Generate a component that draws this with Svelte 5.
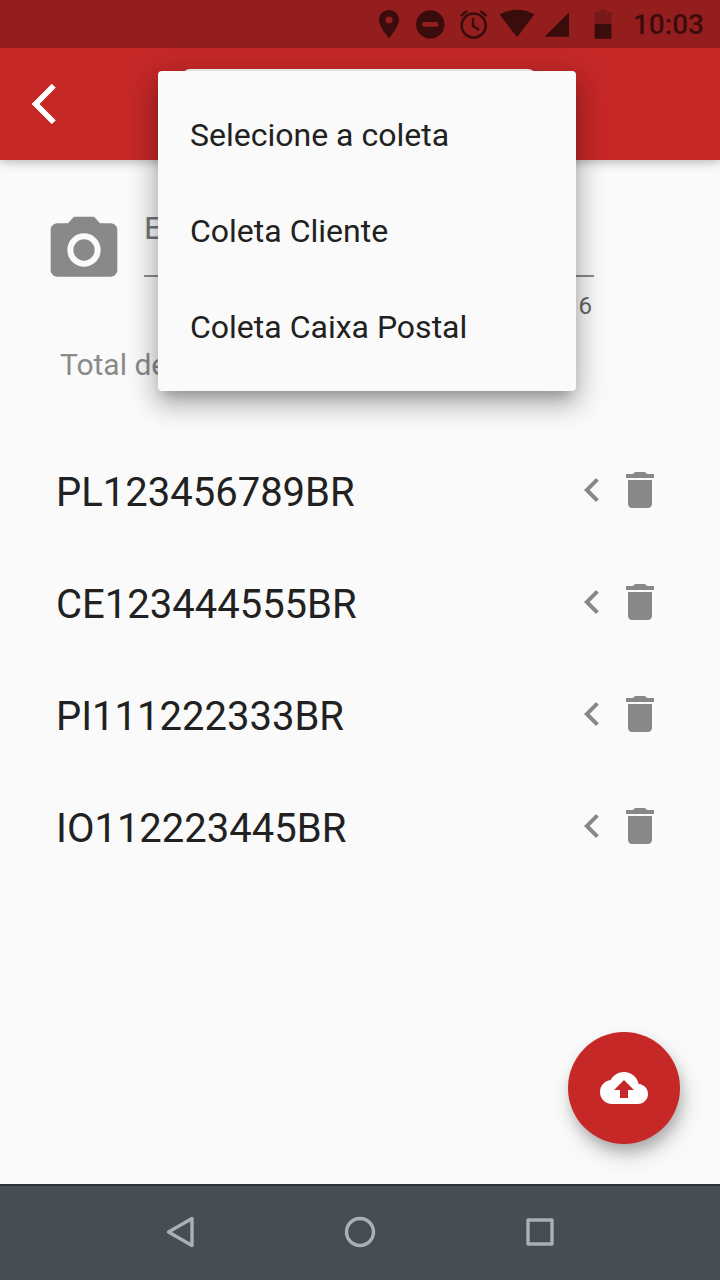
<script lang="ts">
  let codes: string[] = $state(['PL123456789BR', 'CE123444555BR', 'PI111222333BR', 'IO112223445BR']);

  const options = ['Selecione a coleta', 'Coleta Cliente', 'Coleta Caixa Postal'];

  function remove(code: string) {
    codes = codes.filter(c => c !== code);
  }
</script>

<div class="screen">
  <div class="status-bar">
    <svg width="250" height="48" viewBox="0 0 250 48" fill="currentColor">
      <path fill-rule="evenodd" d="M19 10c-5.600 0-10 4.300-10 9.800C9 27.300 19 38 19 38s10-10.700 10-18.200C29 14.300 24.600 10 19 10zm0 6.400a3.500 3.500 0 1 1 0 7 3.500 3.500 0 0 1 0-7z" />
      <path fill-rule="evenodd" d="M60.300 10.200a14.200 14.200 0 1 0 0 28.400 14.200 14.200 0 0 0 0-28.400zM54.500 22h11.600a2.400 2.400 0 0 1 0 4.800H54.500a2.400 2.400 0 0 1 0-4.800z" />
      <g fill="none" stroke="currentColor" stroke-width="2.600">
        <circle cx="103.700" cy="25.500" r="12" />
        <path d="M90.800 16l6.200-5M116.600 16l-6.200-5M103 18v8l6 3.800" stroke-width="2.300" />
      </g>
      <path d="M129.700 14.500C139 8.200 155 8.200 164.300 14.500L147 37.300z" />
      <path d="M174.500 36.700L199 12.500v24.200z" />
      <path d="M224.500 24V12h5V9.500h7V12h5v12z" opacity="0.3" />
      <path d="M224.500 24h17v14.800h-17z" />
    </svg>
    <span class="clock">10:03</span>
  </div>

  <header class="app-bar">
    <button class="icon-button" aria-label="Voltar">
      <svg class="back" width="48" height="48" viewBox="0 0 24 24">
        <path d="M11.670 3.870L9.900 2.100 0 12l9.900 9.900 1.770-1.770L3.540 12z" />
      </svg>
    </button>
    <div class="dropdown"></div>
  </header>

  <main>
    <div class="entry">
      <svg width="80" height="80" viewBox="0 0 24 24" fill="currentColor">
        <circle cx="12" cy="12" r="3.200" />
        <path d="M9 2L7.170 4H4c-1.100 0-2 .9-2 2v12c0 1.100.9 2 2 2h16c1.100 0 2-.9 2-2V6c0-1.100-.9-2-2-2h-3.170L15 2H9zm3 15c-2.760 0-5-2.240-5-5s2.240-5 5-5 5 2.240 5 5-2.240 5-5 5z" />
      </svg>
      <div class="field">
        <div class="input">E</div>
        <div class="counter">6</div>
      </div>
    </div>

    <div class="total">Total de</div>

    <ul class="codes">
      {#each codes as code (code)}
        <li>
          <span class="code">{code}</span>
          <svg width="48" height="48" viewBox="0 0 24 24" fill="currentColor">
            <path d="M15.410 7.410L14 6l-6 6 6 6 1.410-1.410L10.830 12z" />
          </svg>
          <button class="icon-button" aria-label="Excluir" onclick={() => remove(code)}>
            <svg width="48" height="48" viewBox="0 0 24 24" fill="currentColor">
              <path d="M6 19c0 1.100.9 2 2 2h8c1.100 0 2-.9 2-2V7H6v12zM19 4h-3.500l-1-1h-5l-1 1H5v2h14V4z" />
            </svg>
          </button>
        </li>
      {/each}
    </ul>
  </main>

  <nav class="nav-bar">
    <svg width="48" height="48" viewBox="0 0 48 48">
      <path d="M12.500 24L36 10.500v27z" />
    </svg>
    <svg width="48" height="48" viewBox="0 0 48 48">
      <circle cx="24" cy="24" r="13.500" />
    </svg>
    <svg width="48" height="48" viewBox="0 0 48 48">
      <rect x="12" y="12" width="24" height="24" />
    </svg>
  </nav>

  <div class="menu">
    {#each options as option}
      <div class="menu-item">{option}</div>
    {/each}
  </div>

  <button class="fab" aria-label="Enviar">
    <svg width="48" height="48" viewBox="0 0 24 24" fill="#fff">
      <path d="M19.350 10.040C18.670 6.590 15.640 4 12 4 9.110 4 6.600 5.640 5.350 8.040 2.340 8.360 0 10.910 0 14c0 3.310 2.690 6 6 6h13c2.760 0 5-2.240 5-5 0-2.640-2.050-4.780-4.650-4.960zM14 13v4h-4v-4H7l5-5 5 5h-3z" />
    </svg>
  </button>
</div>

<style>
  :global(body) {
    margin: 0;
  }

  .screen {
    position: relative;
    display: flex;
    flex-direction: column;
    width: 720px;
    height: 1280px;
    overflow: hidden;
    background: #fafafa;
    color: #212121;
    font-family: Roboto, sans-serif;
  }

  svg {
    display: block;
    flex: none;
  }

  .icon-button {
    padding: 0;
    border: none;
    background: none;
    color: inherit;
  }

  .status-bar {
    display: flex;
    justify-content: flex-end;
    align-items: center;
    height: 48px;
    padding-right: 16px;
    background: #941e1e;
    color: #3b0c0c;
    z-index: 2;
  }

  .clock {
    width: 84px;
    padding-top: 2px;
    text-align: right;
    font-size: 28px;
    font-weight: 500;
    line-height: 48px;
  }

  .app-bar {
    display: flex;
    align-items: center;
    gap: 102px;
    height: 112px;
    padding-left: 32px;
    background: #c62828;
    box-shadow: 0 2px 10px rgba(0, 0, 0, 0.28);
    z-index: 1;
  }

  .back {
    fill: #fff;
    stroke: #fff;
    stroke-width: 0.4;
    overflow: visible;
  }

  .dropdown {
    width: 354px;
    height: 70px;
    border-radius: 8px;
    background: #fafafa;
  }

  main {
    flex: 1;
    padding: 50px 56px 0 44px;
  }

  .entry {
    display: flex;
    gap: 20px;
    color: #898989;
  }

  .field {
    width: 450px;
  }

  .input {
    height: 65px;
    border-bottom: 2px solid #8a8a8a;
    color: #757575;
    font-size: 32px;
    line-height: 36px;
  }

  .counter {
    padding: 14px 2px 0 0;
    color: #666;
    font-size: 24px;
    line-height: 30px;
    text-align: right;
  }

  .total {
    margin: 26px 0 0 16px;
    color: #8a8a8a;
    font-size: 30px;
    line-height: 36px;
  }

  .codes {
    margin: 51px 0 0 12px;
    padding: 0;
    list-style: none;
  }

  .codes li {
    display: flex;
    align-items: center;
    height: 112px;
    color: #888;
  }

  .code {
    flex: 1;
    padding-top: 6px;
    color: #212121;
    font-size: 40px;
    line-height: 48px;
  }

  .nav-bar {
    display: flex;
    align-items: center;
    justify-content: center;
    gap: 132px;
    box-sizing: border-box;
    height: 96px;
    padding-bottom: 2px;
    border-top: 2px solid #2d3437;
    background: #464e53;
  }

  .nav-bar svg {
    fill: none;
    stroke: #aab0b3;
    stroke-width: 3.4;
    stroke-linejoin: round;
  }

  .menu {
    position: absolute;
    top: 71px;
    left: 158px;
    z-index: 2;
    box-sizing: border-box;
    width: 418px;
    height: 320px;
    padding: 16px 0;
    border-radius: 4px;
    background: #fafafa;
    box-shadow:
      0 10px 12px -6px rgba(0, 0, 0, 0.22),
      0 14px 24px 2px rgba(0, 0, 0, 0.16),
      0 6px 32px 4px rgba(0, 0, 0, 0.16);
  }

  .menu-item {
    height: 96px;
    padding-left: 32px;
    font-size: 32px;
    line-height: 97px;
  }

  .fab {
    position: absolute;
    right: 40px;
    bottom: 136px;
    display: flex;
    align-items: center;
    justify-content: center;
    width: 112px;
    height: 112px;
    padding: 0;
    border: none;
    border-radius: 50%;
    background: #c62828;
    box-shadow:
      2px 8px 14px -2px rgba(0, 0, 0, 0.22),
      4px 12px 22px rgba(0, 0, 0, 0.16);
  }
</style>
